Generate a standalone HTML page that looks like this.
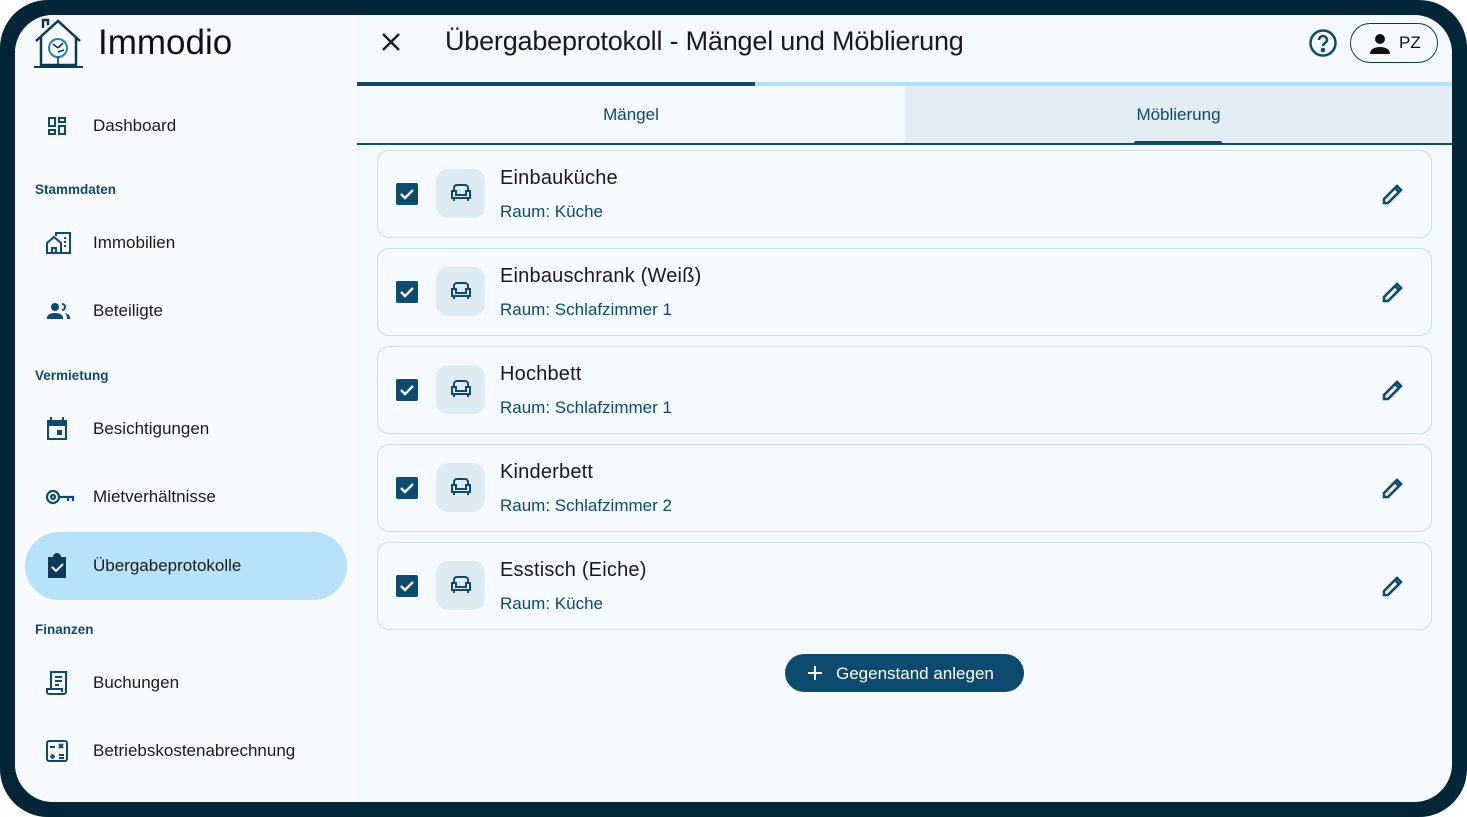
<!DOCTYPE html><html><head><meta charset="utf-8"><style>
*{box-sizing:border-box;margin:0;padding:0}
body{width:1467px;height:817px;background:#fff;font-family:"Liberation Sans",sans-serif;overflow:hidden;position:relative}
.frame{position:absolute;left:0;top:0;width:1467px;height:817px;background:#022538;border-radius:48px}
.scr{position:absolute;left:15px;top:15px;width:1437px;height:787px;border-radius:38px;background:#f4fafe;overflow:hidden}
.side{position:absolute;left:0;top:0;width:342px;height:787px;background:#f8fbfe}
.logo{position:absolute;left:18px;top:2px}
.brand{position:absolute;left:83px;top:8px;font-size:35px;color:#111}
.item{position:absolute;left:10px;width:322px;height:68px;border-radius:34px;display:flex;align-items:center;font-size:17px;color:#1a1a1a}
.item svg{position:absolute;left:20px}
.item span{position:absolute;left:68px}
.act{background:#b6e2fb}
.sec{position:absolute;left:20px;font-size:13.5px;font-weight:bold;color:#0c4a6e}
.main{position:absolute;left:342px;top:0;width:1095px;height:787px;background:#f3f9fd}
.title{position:absolute;left:88px;top:11px;font-size:27px;color:#1a1a1a;letter-spacing:-.2px}
.card{position:absolute;left:20px;width:1055px;height:88px;border:1.5px solid #c9dce8;border-radius:12px;background:#f4fafe}
.cb{position:absolute;left:18px;top:32px;width:22px;height:22px;background:#0c4a6e;border-radius:2px}
.ib{position:absolute;left:58px;top:18px;width:49px;height:49px;border-radius:12px;background:#dfebf2}
.n{position:absolute;left:122px;top:16px;font-size:20px;color:#1a1a1a;letter-spacing:.2px}
.r{position:absolute;left:122px;top:51px;font-size:17px;color:#0c4a6e;letter-spacing:0}
.pen{position:absolute;right:26px;top:31px}
</style></head><body><div class="frame"></div><div class="scr">
<div class="side">
<svg class="logo" width="52" height="52" viewBox="0 0 52 52" fill="none" stroke="#0c3a56" stroke-width="2.5"><path d="M3 24 L25 4 L47 24"/><path d="M8 20 V48 H43 V20"/><path d="M10 11 V3 H15 V8"/><path d="M1 50 H50" stroke-width="2"/><circle cx="25" cy="31" r="9" stroke="#2a7fae" stroke-width="2"/><path d="M25 40 V48 M25 31 L20 27 M25 31 L30 26 M25 35 L31 33" stroke-width="1.6"/></svg>
<div class="brand">Immodio</div>
<div class="item" style="top:77px"><svg width="24" height="24" viewBox="0 0 24 24" fill="#0c4a6e"><path d="M3 3h8v10H3zm2 2v6h4V5zM13 3h8v6h-8zm2 2v2h4V5zM13 11h8v10h-8zm2 2v6h4v-6zM3 15h8v6H3zm2 2v2h4v-2z"/></svg><span>Dashboard</span></div>
<div class="sec" style="top:167px">Stammdaten</div>
<div class="item" style="top:194px"><svg width="28" height="24" viewBox="0 0 28 24" fill="none" stroke="#0c4a6e" stroke-width="2"><path d="M2 22V12l7-6 7 6v10H2zM7 22v-5h4v5M11 5V2h14v20h-9"/><path d="M19 7h2M19 11h2M19 15h2" /></svg><span>Immobilien</span></div>
<div class="item" style="top:262px"><svg width="28" height="24" viewBox="0 0 28 24" fill="#0c4a6e"><circle cx="10" cy="8" r="4"/><path d="M2 19c0-4 5-5 8-5s8 1 8 5v1H2z"/><path d="M17 4a4 4 0 010 8v-2a2 2 0 000-4zM20 14c3 1 5 2 5 5v1h-3v-1c0-2-1-4-2-5z"/></svg><span>Beteiligte</span></div>
<div class="sec" style="top:353px">Vermietung</div>
<div class="item" style="top:380px"><svg width="24" height="26" viewBox="0 0 24 26" fill="#0c4a6e"><path d="M5 1h2v3h10V1h2v3h3v20H2V4h3zM4 10v12h16V10zm8 4h5v5h-5z"/></svg><span>Besichtigungen</span></div>
<div class="item" style="top:448px"><svg width="30" height="24" viewBox="0 0 30 24" fill="none" stroke="#0c4a6e" stroke-width="2.2"><circle cx="8" cy="12" r="6"/><circle cx="8" cy="12" r="2"/><path d="M14 12h14v4M23 12v4"/></svg><span>Mietverhältnisse</span></div>
<div class="item act" style="top:517px"><svg width="24" height="26" viewBox="0 0 24 26" fill="#0c3a56"><path d="M3 4h5a4 4 0 018 0h5v21H3z"/><path d="M7 14l4 4 7-7" stroke="#fff" stroke-width="2" fill="none"/></svg><span>Übergabeprotokolle</span></div>
<div class="sec" style="top:607px">Finanzen</div>
<div class="item" style="top:634px"><svg width="24" height="26" viewBox="0 0 24 26" fill="none" stroke="#0c4a6e" stroke-width="2"><path d="M6 19V2h15v20a2 2 0 01-2 2H4a2 2 0 01-2-2v-3h15v3M10 7h7M10 11h7M10 15h4"/></svg><span>Buchungen</span></div>
<div class="item" style="top:702px"><svg width="24" height="24" viewBox="0 0 24 24" fill="none" stroke="#0c4a6e" stroke-width="2"><rect x="2" y="2" width="20" height="20" rx="2"/><path d="M5 8h5M7.5 15v5M5 17.5h5M14 5l4 4M18 5l-4 4M14 16h5M14 19h5"/></svg><span>Betriebskostenabrechnung</span></div>
</div>
<div class="main">
<svg style="position:absolute;left:24px;top:17px" width="20" height="20" viewBox="0 0 20 20" stroke="#1a1a1a" stroke-width="2.4"><path d="M2 2L18 18M18 2L2 18"/></svg>
<div class="title">Übergabeprotokoll - Mängel und Möblierung</div>
<svg style="position:absolute;left:951px;top:13px" width="30" height="30" viewBox="0 0 30 30" fill="none" stroke="#0c4a6e" stroke-width="2.5"><circle cx="15" cy="15" r="12.5"/><path d="M11 12a4 4 0 118 0c0 3-4 3-4 6"/><circle cx="15" cy="22" r="1" fill="#0c4a6e"/></svg>
<div style="position:absolute;left:993px;top:8px;width:88px;height:40px;border:1.5px solid #0c3a56;border-radius:20px"><svg style="position:absolute;left:18px;top:9px" width="22" height="22" viewBox="0 0 22 22" fill="#111"><circle cx="11" cy="6" r="5"/><path d="M1 21c0-5 5-7 10-7s10 2 10 7z"/></svg><span style="position:absolute;left:48px;top:9px;font-size:17px;color:#111">PZ</span></div>
<div style="position:absolute;left:0;top:67px;width:1095px;height:4px;background:#b3e1fb"></div>
<div style="position:absolute;left:0;top:67px;width:398px;height:4px;background:#0c4a6e"></div>
<div style="position:absolute;left:548px;top:71px;width:547px;height:58px;background:#e1edf3"></div>
<div style="position:absolute;left:0;top:128px;width:1095px;height:2px;background:#0c4a6e"></div>
<div style="position:absolute;left:0;top:90px;width:548px;text-align:center;font-size:17px;color:#0c4a6e">Mängel</div>
<div style="position:absolute;left:548px;top:90px;width:547px;text-align:center;font-size:17px;color:#0c4a6e">Möblierung</div>
<div style="position:absolute;left:777px;top:126px;width:88px;height:4px;background:#0c4a6e;border-radius:2px 2px 0 0"></div>
<div class="card" style="top:135px"><div class="cb"><svg width="22" height="22"><path d="M5 11l4 4 8-8" stroke="#fff" stroke-width="2.4" fill="none"/></svg></div><div class="ib"><svg style="margin:13px" width="24" height="22" viewBox="0 0 24 22" fill="none" stroke="#0c4a6e" stroke-width="2"><path d="M5 9V6a3 3 0 013-3h8a3 3 0 013 3v3M3 9h4v4h10V9h4v7H3zM5 16v3M19 16v3"/></svg></div><div class="n">Einbauküche</div><div class="r">Raum: Küche</div><svg class="pen" width="24" height="24" viewBox="0 0 24 24" fill="none" stroke="#0c4a6e" stroke-width="2.6"><path d="M3 21v-4L16 4l4 4L7 21zM14 6l4 4"/></svg></div>
<div class="card" style="top:233px"><div class="cb"><svg width="22" height="22"><path d="M5 11l4 4 8-8" stroke="#fff" stroke-width="2.4" fill="none"/></svg></div><div class="ib"><svg style="margin:13px" width="24" height="22" viewBox="0 0 24 22" fill="none" stroke="#0c4a6e" stroke-width="2"><path d="M5 9V6a3 3 0 013-3h8a3 3 0 013 3v3M3 9h4v4h10V9h4v7H3zM5 16v3M19 16v3"/></svg></div><div class="n">Einbauschrank (Weiß)</div><div class="r">Raum: Schlafzimmer 1</div><svg class="pen" width="24" height="24" viewBox="0 0 24 24" fill="none" stroke="#0c4a6e" stroke-width="2.6"><path d="M3 21v-4L16 4l4 4L7 21zM14 6l4 4"/></svg></div>
<div class="card" style="top:331px"><div class="cb"><svg width="22" height="22"><path d="M5 11l4 4 8-8" stroke="#fff" stroke-width="2.4" fill="none"/></svg></div><div class="ib"><svg style="margin:13px" width="24" height="22" viewBox="0 0 24 22" fill="none" stroke="#0c4a6e" stroke-width="2"><path d="M5 9V6a3 3 0 013-3h8a3 3 0 013 3v3M3 9h4v4h10V9h4v7H3zM5 16v3M19 16v3"/></svg></div><div class="n">Hochbett</div><div class="r">Raum: Schlafzimmer 1</div><svg class="pen" width="24" height="24" viewBox="0 0 24 24" fill="none" stroke="#0c4a6e" stroke-width="2.6"><path d="M3 21v-4L16 4l4 4L7 21zM14 6l4 4"/></svg></div>
<div class="card" style="top:429px"><div class="cb"><svg width="22" height="22"><path d="M5 11l4 4 8-8" stroke="#fff" stroke-width="2.4" fill="none"/></svg></div><div class="ib"><svg style="margin:13px" width="24" height="22" viewBox="0 0 24 22" fill="none" stroke="#0c4a6e" stroke-width="2"><path d="M5 9V6a3 3 0 013-3h8a3 3 0 013 3v3M3 9h4v4h10V9h4v7H3zM5 16v3M19 16v3"/></svg></div><div class="n">Kinderbett</div><div class="r">Raum: Schlafzimmer 2</div><svg class="pen" width="24" height="24" viewBox="0 0 24 24" fill="none" stroke="#0c4a6e" stroke-width="2.6"><path d="M3 21v-4L16 4l4 4L7 21zM14 6l4 4"/></svg></div>
<div class="card" style="top:527px"><div class="cb"><svg width="22" height="22"><path d="M5 11l4 4 8-8" stroke="#fff" stroke-width="2.4" fill="none"/></svg></div><div class="ib"><svg style="margin:13px" width="24" height="22" viewBox="0 0 24 22" fill="none" stroke="#0c4a6e" stroke-width="2"><path d="M5 9V6a3 3 0 013-3h8a3 3 0 013 3v3M3 9h4v4h10V9h4v7H3zM5 16v3M19 16v3"/></svg></div><div class="n">Esstisch (Eiche)</div><div class="r">Raum: Küche</div><svg class="pen" width="24" height="24" viewBox="0 0 24 24" fill="none" stroke="#0c4a6e" stroke-width="2.6"><path d="M3 21v-4L16 4l4 4L7 21zM14 6l4 4"/></svg></div>
<div style="position:absolute;left:428px;top:639px;width:239px;height:38px;border-radius:19px;background:#0c4a6e;color:#fff;font-size:17px"><svg style="position:absolute;left:23px;top:12px" width="14" height="14" stroke="#fff" stroke-width="2"><path d="M7 0v14M0 7h14"/></svg><span style="position:absolute;left:51px;top:10px">Gegenstand anlegen</span></div>
</div></div></body></html>
